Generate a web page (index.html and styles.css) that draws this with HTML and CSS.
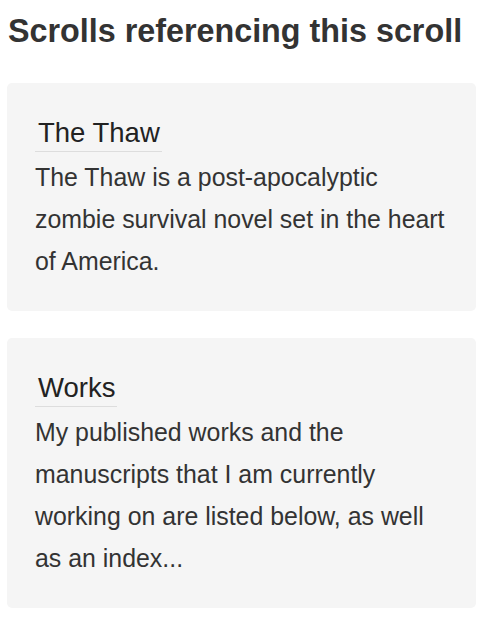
FILE: index.html
```html
<!DOCTYPE html>
<html>
<head>
<meta charset="utf-8">
<link rel="stylesheet" href="styles.css">
</head>
<body>
<h2 class="heading">Scrolls referencing this scroll</h2>
<div class="list">
  <div class="card">
    <a class="card-title" href="#">The Thaw</a>
    <p class="card-desc">The Thaw is a post-apocalyptic zombie survival novel set in the heart of America.</p>
  </div>
  <div class="card">
    <a class="card-title" href="#">Works</a>
    <p class="card-desc">My published works and the manuscripts that I am currently working on are listed below, as well as an index...</p>
  </div>
</div>
</body>
</html>
```
FILE: styles.css
```css
body {
  margin: 0;
  padding: 0 8px;
  font-family: "Liberation Sans", Arial, sans-serif;
  background: #fff;
}
.heading {
  margin: 0;
  padding-top: 12px;
  font-size: 32.3px;
  line-height: 38px;
  font-weight: bold;
  color: #333;
}
.list {
  display: flex;
  flex-direction: column;
  gap: 27px;
  margin-top: 33px;
  width: 469px;
  margin-left: -1px;
}
.card {
  background: #f5f5f5;
  border-radius: 5px;
  padding: 34px 28px 29px;
}
.card-title {
  display: inline-block;
  font-size: 27.5px;
  line-height: 32px;
  color: #222;
  text-decoration: none;
  border-bottom: 1px solid #ddd;
  padding: 0 2px 2px 3px;
}
.card-desc {
  margin: 4px 0 0;
  font-size: 24.9px;
  line-height: 42px;
  color: #333;
}
```
